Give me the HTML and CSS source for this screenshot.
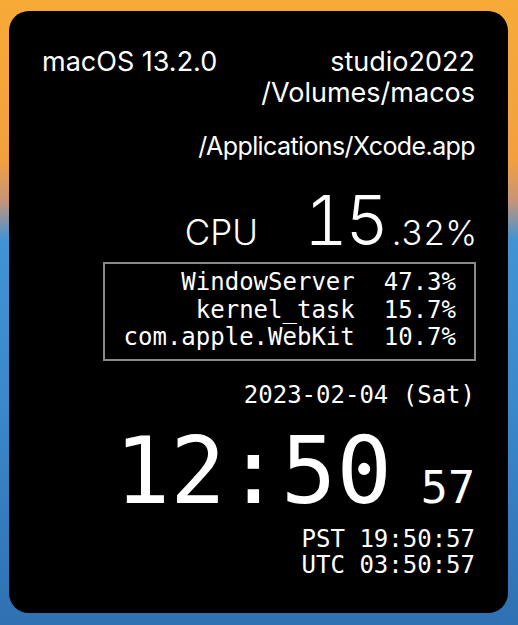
FILE: index.html
```html
<!DOCTYPE html>
<html lang="en">
<head>
<meta charset="utf-8">
<title>System widget</title>
<link rel="stylesheet" href="styles.css">
</head>
<body>
<div class="panel">
  <div class="header">
    <div class="os">macOS 13.2.0</div>
    <div class="host">
      <div>studio2022</div>
      <div>/Volumes/macos</div>
    </div>
  </div>
  <div class="app">/Applications/Xcode.app</div>
  <div class="cpu">
    <span class="cpu-label">CPU</span>
    <span class="cpu-int">15</span><span class="cpu-frac">.32%</span>
  </div>
  <div class="procs">
    <span class="pname">WindowServer</span><span class="pval">47.3%</span>
    <span class="pname">kernel_task</span><span class="pval">15.7%</span>
    <span class="pname">com.apple.WebKit</span><span class="pval">10.7%</span>
  </div>
  <div class="date">2023-02-04 (Sat)</div>
  <div class="clock"><span class="hm">12:50</span><span class="sec">57</span></div>
  <div class="zones">
    <div>PST 19:50:57</div>
    <div>UTC 03:50:57</div>
  </div>
</div>
</body>
</html>
```

FILE: styles.css
```css
* { box-sizing: border-box; }

html, body {
  margin: 0;
  height: 100%;
}

body {
  padding: 11px 10px 12px 9px;
  background: linear-gradient(to bottom,
    #f7aa38 0px,
    #f2a03e 160px,
    #c89478 200px,
    #4193d4 240px,
    #3b88cb 400px,
    #2f71b3 625px);
  font-family: Inter, "Noto Sans", sans-serif;
  color: #fff;
}

.panel {
  width: 499px;
  height: 602px;
  background: #000;
  border-radius: 20px;
  padding: 35px 33px 0 33px;
  display: flex;
  flex-direction: column;
}

.header {
  display: flex;
  justify-content: space-between;
  font-size: 27px;
  line-height: 31px;
}

.host { text-align: right; }

.app {
  margin-top: 23px;
  text-align: right;
  font-size: 25px;
  letter-spacing: -0.6px;
  line-height: 31px;
}

.cpu {
  margin-top: 24px;
  margin-right: -2px;
  display: flex;
  justify-content: flex-end;
  align-items: baseline;
  line-height: 1;
  font-weight: 300;
  font-variant-numeric: tabular-nums;
}

.cpu-label {
  font-size: 35px;
  margin-right: 46px;
}

.cpu-int {
  font-size: 68px;
  letter-spacing: -3px;
  margin-right: 6px;
}

.cpu-frac {
  font-size: 34px;
}

.procs {
  align-self: flex-end;
  margin-top: 8px;
  margin-right: -1px;
  border: 2px solid #8a8a8a;
  padding: 5px 18px 7px 19px;
  display: grid;
  grid-template-columns: auto auto;
  column-gap: 29px;
  font-family: "DejaVu Sans Mono", "Liberation Mono", monospace;
  font-size: 24px;
  line-height: 27.5px;
}

.pname { text-align: right; }

.date {
  margin-top: 21px;
  text-align: right;
  font-family: "DejaVu Sans Mono", "Liberation Mono", monospace;
  font-size: 24px;
  line-height: 27px;
}

.clock {
  margin-top: 17px;
  display: flex;
  justify-content: flex-end;
  align-items: baseline;
  line-height: 1;
  font-family: "DejaVu Sans Mono", "Liberation Mono", monospace;
}

.hm { font-size: 92px; }

.sec {
  font-size: 45px;
  margin-left: 29px;
}

.zones {
  margin-top: 8px;
  text-align: right;
  font-family: "DejaVu Sans Mono", "Liberation Mono", monospace;
  font-size: 24px;
  line-height: 26px;
}
```
